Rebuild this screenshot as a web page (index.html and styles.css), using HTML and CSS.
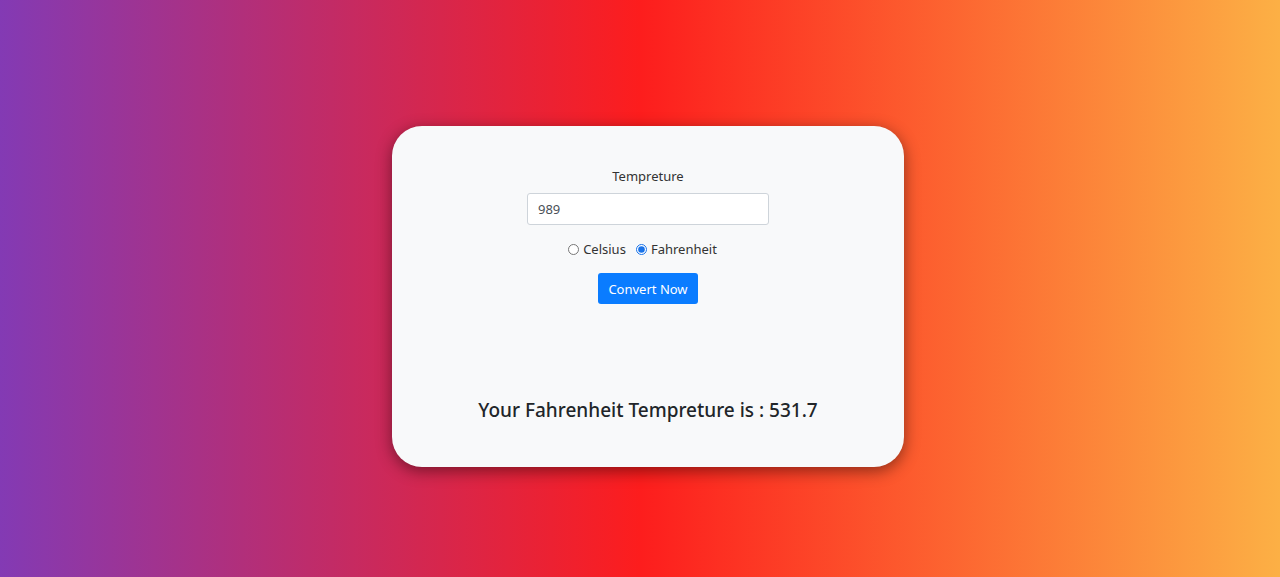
FILE: index.html
```html
<!DOCTYPE html>
<html lang="en">
<head>
<meta charset="utf-8">
<title>Temperature Converter</title>
<link rel="stylesheet" href="styles.css">
</head>
<body>
<main class="page">
  <section class="card">
    <form class="form">
      <label class="label" for="temp">Tempreture</label>
      <input class="input" id="temp" type="text" value="989">
      <div class="radios">
        <label class="radio"><input type="radio" name="unit"> Celsius</label>
        <label class="radio"><input type="radio" name="unit" checked> Fahrenheit</label>
      </div>
      <button class="btn" type="button">Convert Now</button>
    </form>
    <h2 class="result">Your Fahrenheit Tempreture is : 531.7</h2>
  </section>
</main>
</body>
</html>
```

FILE: styles.css
```css
* { box-sizing: border-box; }
html, body { margin: 0; height: 100%; }
body {
  font-family: "Noto Sans", "Open Sans", sans-serif;
  color: #212529;
}
.page {
  height: 577px;
  background: linear-gradient(90deg, #833ab4 0%, #fd1d1d 50%, #fcb045 100%);
  display: flex;
  justify-content: center;
  padding-top: 126px;
}
.card {
  width: 512px;
  height: 341px;
  background: #f8f9fa;
  border-radius: 30px;
  box-shadow: 0 4px 16px rgba(0,0,0,0.45);
  display: flex;
  flex-direction: column;
  align-items: center;
  padding-top: 40px;
  margin-left: 16px;
}
.form {
  display: flex;
  flex-direction: column;
  align-items: center;
}
.label {
  font-size: 13px;
  line-height: 20px;
  color: #333;
  margin-bottom: 7px;
}
.input {
  width: 242px;
  height: 32px;
  border: 1px solid #ced4da;
  border-radius: 3px;
  background: #fff;
  padding: 0 10px;
  font: inherit;
  font-size: 13px;
  color: #495057;
}
.radios {
  display: flex;
  gap: 10px;
  margin: 14px 11px 0 0;
  font-size: 13px;
  line-height: 20px;
  color: #333;
}
.radio { display: flex; align-items: center; gap: 4px; }
.radio input { margin: 0; width: 11px; height: 11px; accent-color: #1a73e8; }
.btn {
  margin-top: 14px;
  width: 100px;
  height: 31px;
  border: none;
  border-radius: 3px;
  background: #0a7cff;
  color: #fff;
  font: inherit;
  font-size: 13px;
}
.result {
  margin: 93px 0 0;
  font-size: 19px;
  font-weight: 500;
  line-height: 26px;
  color: #212529;
}
```
